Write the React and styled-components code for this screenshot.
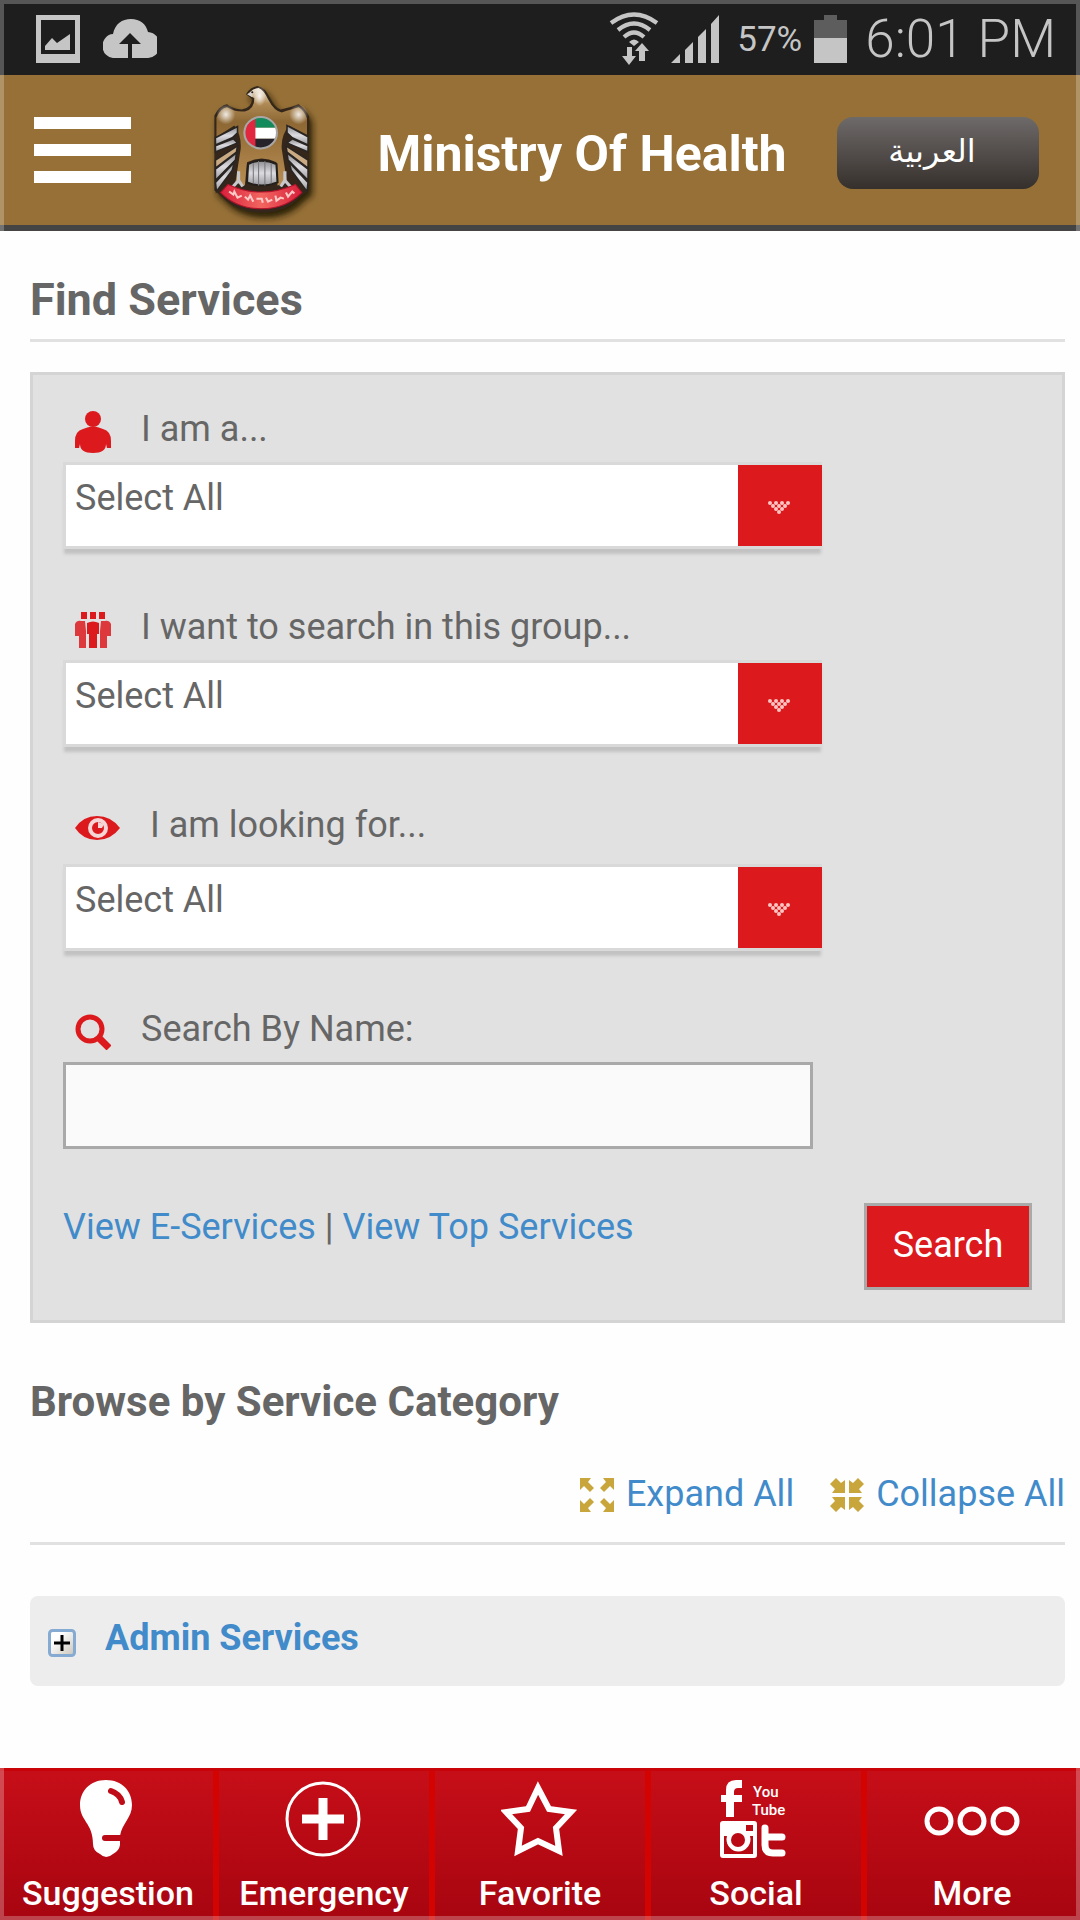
import React, { useState } from 'react';
import styled, { createGlobalStyle } from 'styled-components';


const options = ['Select All', 'Individual', 'Business', 'Government'];

const App = () => {
  const [name, setName] = useState('')

  return (
    <>
      <GlobalStyle />
      <Screen>
        <StatusBar>
          <StatusGroup>
            <PhotoIcon />
            <CloudIcon />
          </StatusGroup>
          <StatusGroup>
            <WifiIcon />
            <SignalIcon />
            <BatteryText>57%</BatteryText>
            <BatteryIcon />
            <Clock>6:01 PM</Clock>
          </StatusGroup>
        </StatusBar>

        <Header>
          <MenuButton type="button" aria-label="Menu">
            <MenuBar /><MenuBar /><MenuBar />
          </MenuButton>
          <Emblem />
          <Title>Ministry Of Health</Title>
          <LangButton type="button" lang="ar">العربية</LangButton>
        </Header>

        <Main>
          <PageTitle>Find Services</PageTitle>
          <SearchForm onSubmit={(e) => e.preventDefault()}>
            <SelectField id="iam" label="I am a..." icon={<PersonIcon />} />
            <SelectField id="group" label="I want to search in this group..." icon={<GroupIcon />} />
            <SelectField id="looking" label="I am looking for..." icon={<EyeIcon />} $space={13} />
            <Field>
              <Label htmlFor="name" $space={7}><SearchIcon />Search By Name:</Label>
              <TextInput id="name" type="text" value={name} onChange={(e) => setName(e.target.value)} />
            </Field>
            <Actions>
              <Links>
                <Link href="#">View E-Services</Link> | <Link href="#">View Top Services</Link>
              </Links>
              <SearchButton type="submit">Search</SearchButton>
            </Actions>
          </SearchForm>

          <SectionTitle>Browse by Service Category</SectionTitle>
          <Toolbar>
            <ToolLink href="#"><ExpandIcon />Expand All</ToolLink>
            <ToolLink href="#"><CollapseIcon />Collapse All</ToolLink>
          </Toolbar>
          <Category href="#"><PlusIcon />Admin Services</Category>
        </Main>

        <TabBar>
          <Tab href="#"><BulbIcon />Suggestion</Tab>
          <Tab href="#"><EmergencyIcon />Emergency</Tab>
          <Tab href="#"><StarIcon />Favorite</Tab>
          <Tab href="#"><SocialIcon />Social</Tab>
          <Tab href="#"><MoreIcon />More</Tab>
        </TabBar>
        <ScreenEdge />
      </Screen>
    </>
  );
};

const SelectField = ({ id, label, icon, $space = 7 }) => (
  <Field>
    <Label htmlFor={id} $space={$space}>{icon}{label}</Label>
    <SelectBox>
      <Select id={id}>
        {options.map((o) => <option key={o}>{o}</option>)}
      </Select>
      <Arrow><ArrowDots /></Arrow>
    </SelectBox>
  </Field>
);


/* status bar icons */

const PhotoIcon = () => (
  <svg width="44" height="48" viewBox="0 0 44 48" fill="#c5c5c5">
    <path fillRule="evenodd" d="M0 0H44V48H0ZM5 5V39H39V5Z" />
    <path d="M9 35V31L16 23L21 28L34 19V35Z" />
  </svg>
);

const CloudIcon = () => (
  <svg width="54" height="39" viewBox="0 0 54 39">
    <path fill="#c5c5c5" d="M11 39A11 12 0 0 1 10 15C12 5 19 0 28 0S43 5 45 13A13 13 0 0 1 43 39Z" />
    <path fill="#1e1e1e" d="M27 14L38 25H29V39H25V25H16Z" />
  </svg>
);

const WifiIcon = () => (
  <svg width="50" height="53" viewBox="0 0 50 53">
    <g fill="none" stroke="#c5c5c5" strokeWidth="4.2">
      <path d="M2 11Q25 -6 48 11" />
      <path d="M9 18Q25 5 41 18" />
      <path d="M15 25Q25 16 35 25" />
    </g>
    <g fill="#c5c5c5">
      <path d="M20 30Q25 25 30 30L25 34Z" />
      <path d="M18 35H23V44H27L20 53L13 44H18Z" />
      <path d="M30 49V39H26L33 31L40 39H36V49Z" />
    </g>
  </svg>
);

const SignalIcon = () => (
  <svg width="48" height="48" viewBox="0 0 48 48" fill="#c5c5c5">
    <path d="M0 48L9 39V48ZM14 35L22 27V48H14ZM27 22L35 14V48H27ZM40 9L48 0V48H40Z" />
  </svg>
);

const BatteryIcon = () => (
  <svg width="33" height="48" viewBox="0 0 33 48">
    <path fill="#5d5d5d" d="M10 0H23V5H33V24H0V5H10Z" />
    <path fill="#c5c5c5" d="M0 23H33V48H0Z" />
  </svg>
);


/* falcon emblem with the flag roundel */

const Emblem = () => (
  <EmblemSvg viewBox="0 0 114 140" preserveAspectRatio="none" role="img" aria-label="UAE emblem">
    <defs>
      <linearGradient id="body" x1="0" y1="0" x2="0" y2="1">
        <stop offset="0" stopColor="#f3e9dc" />
        <stop offset="0.16" stopColor="#b08a55" />
        <stop offset="0.35" stopColor="#8d6733" />
        <stop offset="1" stopColor="#b98d52" />
      </linearGradient>
      <radialGradient id="shine">
        <stop offset="0" stopColor="#fff" stopOpacity="0.85" />
        <stop offset="1" stopColor="#fff" stopOpacity="0" />
      </radialGradient>
      <linearGradient id="silver" x1="0" y1="0" x2="0" y2="1">
        <stop offset="0" stopColor="#8b8b90" />
        <stop offset="0.5" stopColor="#dcdce0" />
        <stop offset="1" stopColor="#9a9aa0" />
      </linearGradient>
      <linearGradient id="ribbon" x1="0" y1="0" x2="1" y2="0">
        <stop offset="0" stopColor="#d9203c" />
        <stop offset="0.5" stopColor="#f2655f" />
        <stop offset="1" stopColor="#d9203c" />
      </linearGradient>
      <clipPath id="roundel"><circle cx="51" cy="50" r="15" /></clipPath>
      <filter id="shade" x="-20%" y="-20%" width="150%" height="150%">
        <feDropShadow dx="3" dy="5" stdDeviation="3" floodColor="#1a1206" floodOpacity="0.9" />
      </filter>
    </defs>
    <g filter="url(#shade)">
      <path fill="#34281a" d="M7 107V33Q12 23 19 22Q25 27 33 27Q42 26 43 17L37 12Q41 5 48 4Q55 5 60 16Q65 26 70 27Q80 25 87 22Q93 26 97 34V107L90 112Q76 129 52 129Q27 129 13 112Z" />
      <path fill="url(#body)" d="M9 50V35Q13 26 19 25Q27 30 36 29Q45 27 45 16L39 12Q44 6 49 6Q54 8 58 17Q64 29 71 30Q81 27 87 25Q92 28 95 36V52L78 43Q70 53 71 66L76 99L67 102L66 79Q52 72 38 79L36 102L27 99L32 66Q33 53 26 43L9 54Z" />
    </g>
    <ellipse cx="18" cy="32" rx="9" ry="10" fill="url(#shine)" />
    <ellipse cx="87" cy="32" rx="9" ry="10" fill="url(#shine)" />
    <ellipse cx="50" cy="14" rx="6" ry="10" fill="url(#shine)" />
    <path d="M38 12L43 9L43 15Z" fill="#d7d2cc" />
    <circle cx="43" cy="10" r="1" fill="#222" />
    <g fill="url(#silver)" stroke="#292522" strokeWidth="1.5">
      <path d="M8 55L29 44V50L24 55L8 62Z" />
      <path d="M8 63L25 56L29 60L8 69Z" />
      <path d="M8 77L29 63L28 69L8 85Z" fill="#c9aa82" />
      <path d="M8 86L28 70L27 77L8 97Z" />
      <path d="M8 99L26 79L24 87L9 108Z" />
      <path d="M96 54L76 43V50L81 55L96 62Z" />
      <path d="M96 63L81 56L76 60L96 69Z" />
      <path d="M96 77L75 63L76 69L96 85Z" fill="#c9aa82" />
      <path d="M96 86L76 70L77 77L96 97Z" />
      <path d="M96 99L78 79L80 87L95 108Z" />
    </g>
    <path d="M39 81Q52 74 66 81L67 99Q52 105 38 99Z" fill="url(#silver)" stroke="#241f1a" strokeWidth="2" />
    <path d="M44 80V100M49 78V102M55 78V102M61 80V100" stroke="#77777c" strokeWidth="1" />
    <g fill="none" stroke="#c8c8cc" strokeWidth="3">
      <path d="M30 88V97L24 104M30 97L34 103" />
      <path d="M74 88V97L80 104M74 97L70 103" />
    </g>
    <g clipPath="url(#roundel)">
      <path fill="#128a5b" d="M36 34H67V45H36Z" />
      <path fill="#fff" d="M36 45H67V56H36Z" />
      <path fill="#26242a" d="M36 56H67V67H36Z" />
      <path fill="#e0273f" d="M35 34H46V67H35Z" />
    </g>
    <circle cx="51" cy="50" r="15.5" fill="none" stroke="#a9a7a6" strokeWidth="2" />
    <path fill="url(#ribbon)" stroke="#b3122b" strokeWidth="1" d="M20 101Q51 116 84 101L90 109Q75 125 52 125Q28 125 13 109Z" />
    <g fill="none" stroke="#ffc9c6" strokeWidth="2">
      <path d="M21 108l4 3l1-3l3 6l4-2" />
      <path d="M36 113l3 3l2-4l3 6M47 115h5l1 4M56 114l2 4l4-2" />
      <path d="M65 112l1 5l4-3l3 1M75 109l2 4l4-5l2 2" />
    </g>
  </EmblemSvg>
);


/* form icons */

const PersonIcon = () => (
  <svg width="36" height="42" viewBox="0 0 36 42" fill="#dc1a1e">
    <ellipse cx="18" cy="8" rx="8" ry="8" />
    <path d="M8 18Q18 13 28 18Q36 20 36 30V37H32L31 33Q31 42 18 42T5 33L4 37H0V30Q0 20 8 18Z" />
  </svg>
);

const GroupIcon = () => (
  <svg width="36" height="36" viewBox="0 0 36 36" fill="#dc1a1e">
    <path d="M6 0H12V7H6ZM15 0H21V7H15ZM24 0H30V7H24Z" />
    <path d="M0 12Q2 8 6 9H10L11 19L11 36H4V24H0Z" opacity="0.85" />
    <path d="M36 12Q34 8 30 9H26L25 19L25 36H32V24H36Z" opacity="0.85" />
    <path d="M12 11Q18 8 24 11V22H22V36H14V22H12Z" />
  </svg>
);

const EyeIcon = () => (
  <svg width="45" height="24" viewBox="0 0 45 24">
    <path fill="#dc1a1e" d="M0 12Q8 0 22 0T45 12Q36 24 22 24T0 12Z" />
    <circle cx="23" cy="12" r="8" fill="none" stroke="#f5d5d5" strokeWidth="4" />
    <path fill="#f5d5d5" d="M23 12V6L29 8L27 12Z" />
  </svg>
);

const SearchIcon = () => (
  <svg width="36" height="36" viewBox="0 0 36 36" fill="none" stroke="#dc1a1e">
    <circle cx="15" cy="15" r="12" strokeWidth="5" />
    <path d="M24 24L34 34" strokeWidth="7" />
  </svg>
);

const ArrowDots = () => (
  <svg width="22" height="14" viewBox="0 0 22 14" fill="#ffc4c2">
    {[4, 3, 2, 1].map((count, row) =>
      Array.from({ length: count }, (_, i) => (
        <circle key={`${row}-${i}`} cx={2 + row * 3 + i * 6} cy={2 + row * 3} r="2" />
      ))
    )}
  </svg>
);

const ExpandIcon = () => (
  <svg width="34" height="34" viewBox="0 0 34 34" fill="#c9a63c">
    <path d="M0 0H11L8 4L14 10L10 14L4 8L0 12Z" />
    <path d="M34 0H23L26 4L20 10L24 14L30 8L34 12Z" />
    <path d="M0 34H11L8 30L14 24L10 20L4 26L0 22Z" />
    <path d="M34 34H23L26 30L20 24L24 20L30 26L34 22Z" />
  </svg>
);

const CollapseIcon = () => (
  <svg width="34" height="34" viewBox="0 0 34 34" fill="#c9a63c">
    <path d="M15 15H2L5 11L0 6L6 0L11 5L15 2Z" />
    <path d="M19 15H32L29 11L34 6L28 0L23 5L19 2Z" />
    <path d="M15 19H2L5 23L0 28L6 34L11 29L15 32Z" />
    <path d="M19 19H32L29 23L34 28L28 34L23 29L19 32Z" />
  </svg>
);

const PlusIcon = () => (
  <svg width="28" height="28" viewBox="0 0 28 28">
    <defs>
      <linearGradient id="plus" x1="0" y1="0" x2="1" y2="1">
        <stop offset="0.3" stopColor="#fff" />
        <stop offset="1" stopColor="#c9c3b8" />
      </linearGradient>
    </defs>
    <rect x="1.5" y="1.5" width="25" height="25" rx="3" fill="url(#plus)" stroke="#86abd3" strokeWidth="3" />
    <path d="M6 14H22M14 6V22" stroke="#000" strokeWidth="3" />
  </svg>
);


/* tab bar icons */

const BulbIcon = () => (
  <svg width="78" height="78" viewBox="0 0 78 78">
    <path fill="#fff" d="M37 0C53 0 63 11 63 25C63 38 53 43 51 56V65Q50 71 44 74Q37 80 31 74Q24 71 24 64C24 43 11 41 11 25C11 11 21 0 37 0Z" />
    <path d="M42 11Q51 14 53 22" fill="none" stroke="#c00c18" strokeWidth="6" strokeLinecap="round" />
    <path d="M36 58H54" stroke="#b90a15" strokeWidth="6" strokeLinecap="round" />
  </svg>
);

const EmergencyIcon = () => (
  <svg width="78" height="78" viewBox="0 0 78 78">
    <circle cx="38" cy="39" r="36" fill="none" stroke="#fff" strokeWidth="3" />
    <path d="M17 39H59M38 18V60" stroke="#fff" strokeWidth="9" />
  </svg>
);

const StarIcon = () => (
  <svg width="78" height="78" viewBox="0 0 78 78">
    <path fill="none" stroke="#fff" strokeWidth="6" d="M37 8L48 29L70 32L55 48L58 71L37 61L17 71L20 48L5 32L27 29Z" />
  </svg>
);

const SocialIcon = () => (
  <svg width="72" height="78" viewBox="0 0 72 78">
    <path fill="#fff" d="M22 0V8H18Q14 8 14 12V15H22V22H14V37H6V22H1V15H6V10Q6 0 16 0Z" />
    <g fill="#fff" fontFamily="Roboto, sans-serif" fontWeight="500" fontSize="15">
      <text x="33" y="17">You</text>
      <text x="32" y="35">Tube</text>
    </g>
    <path fill="#fff" fillRule="evenodd" d="M3 41H34Q37 41 37 44V75Q37 78 34 78H3Q0 78 0 75V44Q0 41 3 41ZM4 56V74H33V56H30A12 12 0 1 1 7 56ZM26 45V51H33V45Z" />
    <circle cx="18" cy="60" r="9" fill="none" stroke="#fff" strokeWidth="4" />
    <circle cx="18" cy="60" r="7" fill="#b90a15" />
    <path d="M45 48V65Q45 73 53 73H62M45 57H62" fill="none" stroke="#fff" strokeWidth="7" strokeLinecap="round" />
  </svg>
);

const MoreIcon = () => (
  <svg width="96" height="78" viewBox="0 0 96 78" fill="none" stroke="#fff" strokeWidth="5">
    <circle cx="15" cy="41" r="12" />
    <circle cx="48" cy="41" r="12" />
    <circle cx="81" cy="41" r="12" />
  </svg>
);


const GlobalStyle = createGlobalStyle`
  * {
    box-sizing: border-box;
  }
  body {
    margin: 0;
    background-color: #fefefe;
    color: #666;
    font-family: Roboto, 'DejaVu Sans', sans-serif;
    font-size: 36px;
  }
  a {
    text-decoration: none;
  }
  button, input, select {
    font: inherit;
  }
  svg {
    display: block;
    flex-shrink: 0;
  }
`;

const Screen = styled.div`
  min-height: 100vh;
  display: flex;
  flex-direction: column;
`;

const ScreenEdge = styled.div`
  position: fixed;
  inset: 0;
  border: 4px solid rgba(255, 255, 255, 0.25);
  pointer-events: none;
`;

const StatusBar = styled.div`
  display: flex;
  justify-content: space-between;
  align-items: center;
  height: 75px;
  padding: 2px 24px 0 36px;
  background-color: #1e1e1e;
  color: #c5c5c5;
`;

const StatusGroup = styled.div`
  display: flex;
  align-items: center;
  gap: 12px;
  &:first-child {
    gap: 23px;
  }
`;

const BatteryText = styled.span`
  margin-left: 6px;
  padding-top: 2px;
  font-size: 35px;
`;

const Clock = styled.span`
  margin-left: 6px;
  font-size: 53px;
  font-weight: 300;
`;

const Header = styled.header`
  display: flex;
  align-items: center;
  height: 156px;
  padding: 6px 41px 0 34px;
  background-color: #967036;
  border-bottom: 6px solid #444;
`;

const MenuButton = styled.button`
  display: flex;
  flex-direction: column;
  gap: 15px;
  width: 97px;
  padding: 0 0 6px;
  border: none;
  background: none;
  cursor: pointer;
`;

const MenuBar = styled.span`
  height: 12px;
  background-color: #fff;
`;

const EmblemSvg = styled.svg`
  width: 120px;
  height: 142px;
  margin-left: 76px;
`;

const Title = styled.h1`
  flex: 1;
  margin: 0;
  padding-top: 2px;
  color: #fff;
  font-size: 50px;
  font-weight: 700;
  text-align: center;
  white-space: nowrap;
`;

const LangButton = styled.button`
  width: 202px;
  height: 72px;
  padding: 0 12px 4px 0;
  border: none;
  border-radius: 16px;
  background: linear-gradient(#6e6a69, #36302c);
  color: #fff;
  font-family: 'DejaVu Sans', sans-serif;
  font-size: 32px;
  cursor: pointer;
`;

const Main = styled.main`
  flex: 1;
  padding: 39px 15px 30px 30px;
`;

const PageTitle = styled.h2`
  margin: 0 0 30px;
  padding-bottom: 9px;
  border-bottom: 3px solid #e1e1e1;
  font-size: 45px;
  line-height: 60px;
`;

const SearchForm = styled.form`
  display: flex;
  flex-direction: column;
  gap: 50px;
  padding: 26px 30px 30px;
  border: 3px solid #d4d4d4;
  background-color: #e1e1e1;
`;

const Field = styled.div`
  display: flex;
  flex-direction: column;
`;

const Label = styled.label`
  display: flex;
  align-items: center;
  gap: 30px;
  height: 54px;
  margin-bottom: ${(props) => props.$space}px;
  padding: 2px 0 0 12px;
  svg {
    margin-top: 6px;
  }
`;

const SelectBox = styled.div`
  display: flex;
  width: 100%;
  max-width: 759px;
  height: 87px;
  border: solid #d9d9d9;
  border-width: 3px 0 3px 3px;
  box-shadow: 0 6px 3px -1px #c2c2c2;
`;

const Select = styled.select`
  flex: 1;
  min-width: 0;
  padding: 0 9px 16px;
  border: none;
  border-radius: 0;
  background-color: #fff;
  color: #666;
  appearance: none;
`;

const Arrow = styled.span`
  display: flex;
  align-items: center;
  justify-content: center;
  width: 84px;
  padding: 4px 3px 0 0;
  background-color: #dc1a1e;
`;

const TextInput = styled.input`
  width: 100%;
  max-width: 750px;
  height: 87px;
  padding: 0 10px;
  border: 3px solid #a9a9a9;
  background-color: #fafafa;
  color: #666;
`;

const Actions = styled.div`
  display: flex;
  align-items: flex-start;
  justify-content: space-between;
  padding-top: 4px;
`;

const Links = styled.div`
  line-height: 48px;
`;

const Link = styled.a`
  color: #428bca;
`;

const SearchButton = styled.button`
  width: 168px;
  height: 87px;
  padding: 0 0 4px;
  border: 3px solid #a9a9a9;
  background-color: #dc1a1e;
  color: #fff;
  cursor: pointer;
`;

const SectionTitle = styled.h3`
  margin: 49px 0 40px;
  font-size: 42px;
  line-height: 60px;
`;

const Toolbar = styled.div`
  display: flex;
  justify-content: flex-end;
  gap: 36px;
  padding-bottom: 26px;
  border-bottom: 3px solid #e1e1e1;
`;

const ToolLink = styled.a`
  display: flex;
  align-items: center;
  gap: 12px;
  color: #428bca;
  line-height: 44px;
  svg {
    margin-top: 2px;
  }
`;

const Category = styled.a`
  display: flex;
  align-items: center;
  gap: 29px;
  height: 90px;
  margin-top: 51px;
  padding: 0 18px 6px;
  border-radius: 8px;
  background-color: #ededed;
  color: #428bca;
  font-weight: 700;
  svg {
    margin-top: 10px;
  }
`;

const TabBar = styled.nav`
  display: grid;
  grid-template-columns: repeat(5, 1fr);
  height: 152px;
  background: linear-gradient(#c60e18, #a70510);
  border-top: 3px solid #c80409;
`;

const Tab = styled.a`
  display: flex;
  flex-direction: column;
  align-items: center;
  gap: 13px;
  padding-top: 9px;
  border: solid #d20300;
  border-width: 0 3px;
  color: #fff;
  font-size: 34px;
  font-weight: 500;
  line-height: 44px;
  &:first-child {
    border-left-color: transparent;
  }
  &:last-child {
    border-right-color: transparent;
  }
`;

export default App;
